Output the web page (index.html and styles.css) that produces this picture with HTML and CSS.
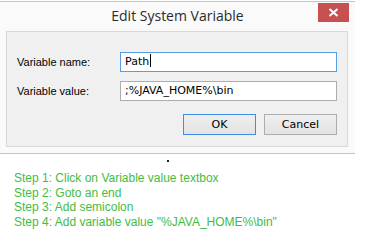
FILE: index.html
```html
<!DOCTYPE html>
<html lang="en">
<head>
    <meta charset="UTF-8">
    <title>Edit System Variable</title>
    <link rel="stylesheet" href="styles.css">
</head>
<body>
    <div class="dialog">
        <div class="titlebar">
            <span></span>
            <h1 class="title">Edit System Variable</h1>
            <button class="close" aria-label="Close">
                <svg width="11" height="9" viewBox="0 0 11 9"><path d="M1.5 1 L9.5 8 M9.5 1 L1.5 8" stroke="#fff" stroke-width="2"/></svg>
            </button>
        </div>
        <div class="panel">
            <div class="field">
                <label>Variable name:</label>
                <div class="input focused">Path<span class="caret"></span></div>
            </div>
            <div class="field">
                <label>Variable value:</label>
                <div class="input">;%JAVA_HOME%\bin</div>
            </div>
            <div class="buttons">
                <button class="btn default">OK</button>
                <button class="btn">Cancel</button>
            </div>
        </div>
    </div>
    <div class="dot"></div>
    <ul class="steps">
        <li>Step 1: Click on Variable value textbox</li>
        <li>Step 2: Goto an end</li>
        <li>Step 3: Add semicolon</li>
        <li>Step 4: Add variable value "%JAVA_HOME%\bin"</li>
    </ul>
</body>
</html>
```

FILE: styles.css
```css
body {
    margin: 0;
    background: #fff;
    font-family: "Liberation Sans", Arial, sans-serif;
}
.dialog {
    width: 355px;
    height: 151px;
    margin-top: 1px;
    background: #fafafa;
    border-top: 1px solid #c4c4c4;
    border-bottom: 1px solid #c4c4c4;
}
.titlebar {
    display: grid;
    grid-template-columns: 1fr auto 1fr;
    align-items: start;
    height: 29px;
}
.title {
    margin: 5px 0 0;
    font-family: "Open Sans", "Liberation Sans", sans-serif;
    font-size: 14px;
    font-weight: normal;
    color: #2b2b2b;
    line-height: 18px;
}
.close {
    justify-self: end;
    width: 31px;
    height: 19px;
    margin: 1px 6px 0 0;
    padding: 0;
    border: none;
    background: #c75050;
    display: flex;
    align-items: center;
    justify-content: center;
}
.panel {
    margin: 0 7px 0 6px;
    padding: 20px 10px 0;
    box-sizing: border-box;
    height: 116px;
    background: #f0f0f0;
    border: 1px solid #d9d9d9;
}
.field {
    display: flex;
    align-items: center;
    margin-bottom: 9px;
    font-size: 11px;
}
.field label {
    width: 103px;
    color: #000;
}
.input {
    flex: 1;
    height: 18px;
    line-height: 18px;
    padding: 0 4px;
    background: #fff;
    border: 1px solid #abadb3;
    font-family: "DejaVu Sans", sans-serif;
    font-size: 11px;
    color: #000;
}
.input.focused {
    border-color: #569de5;
}
.caret {
    display: inline-block;
    width: 1px;
    height: 13px;
    margin-left: 1px;
    vertical-align: -2px;
    background: #000;
}
.buttons {
    display: flex;
    justify-content: flex-end;
    gap: 8px;
    margin-top: 13px;
}
.btn {
    width: 73px;
    height: 21px;
    padding: 0;
    font-family: "DejaVu Sans", sans-serif;
    font-size: 11px;
    color: #000;
    background: linear-gradient(#efefef, #e3e3e3);
    border: 1px solid #acacac;
}
.btn.default {
    border-color: #3c8ee6;
}
.dot {
    width: 2px;
    height: 2px;
    margin: 6px 0 0 167px;
    background: #222;
}
.steps {
    list-style: none;
    margin: 9px 0 0;
    padding: 0 0 0 14px;
    font-size: 12px;
    line-height: 14.5px;
    color: #44bb44;
}
```
